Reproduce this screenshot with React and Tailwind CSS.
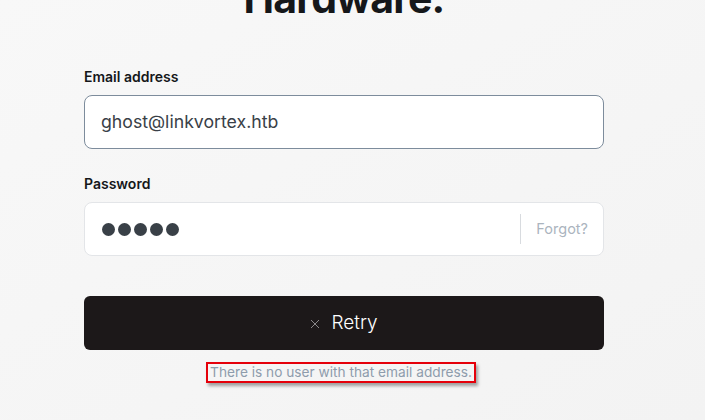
export default function App() {
  return (
    <div
      className="w-[705px] h-[420px] overflow-hidden bg-gradient-to-br from-[#f8f8f8] to-[#f3f3f3] flex flex-col items-center pr-[17px]"
      style={{ fontFamily: "Inter, 'Noto Sans', sans-serif" }}
    >
      <h1 className="mt-[-26px] text-[41px] leading-[48px] font-bold tracking-[-0.02em] text-[#15171a]">
        Hardware.
      </h1>
      <div className="w-[520px] mt-[46px] flex flex-col">
        <label className="text-[14px] leading-[18px] font-semibold text-[#15171a]">Email address</label>
        <div className="mt-[9px] h-[54px] rounded-[8px] border border-[#7d8c9c] bg-white flex items-center px-[16px]">
          <span className="text-[17.7px] text-[#394047]">ghost@linkvortex.htb</span>
        </div>
        <label className="mt-[26px] text-[14px] leading-[18px] font-semibold text-[#15171a]">Password</label>
        <div className="mt-[9px] h-[54px] rounded-[8px] border border-[#e3e5e8] bg-white flex items-center pl-[17px] pr-[15px]">
          <div className="flex gap-[3px] flex-1">
            <span className="w-[13px] h-[13px] rounded-full bg-[#394047]" />
            <span className="w-[13px] h-[13px] rounded-full bg-[#394047]" />
            <span className="w-[13px] h-[13px] rounded-full bg-[#394047]" />
            <span className="w-[13px] h-[13px] rounded-full bg-[#394047]" />
            <span className="w-[13px] h-[13px] rounded-full bg-[#394047]" />
          </div>
          <span className="w-px h-[30px] bg-[#d8dbdf]" />
          <span className="ml-[15px] text-[14.5px] text-[#abb4be]">Forgot?</span>
        </div>
        <button className="mt-[40px] h-[54px] rounded-[6px] bg-[#1c1819] flex items-center justify-center gap-[11px]">
          <svg width="10" height="10" viewBox="0 0 10 10" className="mt-[1px]">
            <path d="M1 1L9 9M9 1L1 9" stroke="#8a8789" strokeWidth="1" />
          </svg>
          <span className="text-[19px] text-white font-light">Retry</span>
        </button>
        <div className="mt-[12px] flex justify-center">
          <span className="ml-[-6px] border-2 border-[#e5000a] shadow-[2px_3px_3px_rgba(0,0,0,0.35)] px-[2px] text-[13.7px] leading-[17px] text-[#8e9cac]">
            There is no user with that email address.
          </span>
        </div>
      </div>
    </div>
  );
}
